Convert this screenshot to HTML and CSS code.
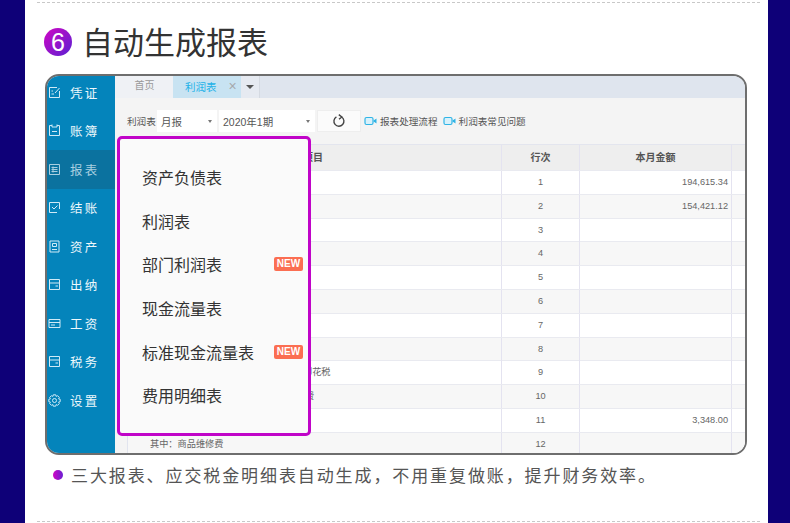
FILE: index.html
```html
<!DOCTYPE html>
<html lang="en">
<head>
    <meta charset="UTF-8">
    <meta name="viewport" content="width=device-width, initial-scale=1.0">
    <title>自动生成报表</title>
    <link rel="stylesheet" href="styles.css">
</head>
<body>
    <svg class="sprites" width="0" height="0">
        <symbol id="camera" viewBox="0 0 13 10">
            <rect x="1" y="1.5" width="8" height="7" rx="1.5" fill="#d8f1fb" stroke="#2fb4e6" stroke-width="1.2"/>
            <path d="M9.5 4.5 12.5 2.5V7.5L9.5 5.5Z" fill="#2fb4e6"/>
        </symbol>
    </svg>

    <div class="sheet">
        <div class="divider"></div>

        <!-- Heading -->
        <div class="heading">
            <span class="number">6</span>
            <h1>自动生成报表</h1>
        </div>

        <!-- App screenshot -->
        <div class="screen">
            <div class="sidebar">
                <div class="nav-item">
                    <svg class="nav-icon" viewBox="0 0 13 13"><path d="M9 1.5H1.5V11.5H11.5V5M5 5H3.5M3.5 8H6M7 7 11.5 2"/></svg>
                    <span>凭证</span>
                </div>
                <div class="nav-item">
                    <svg class="nav-icon" viewBox="0 0 13 13"><path d="M4 1.5H1.5V11.5H11.5V1.5H9M4 .5V3H9V.5M4 7.5H9"/></svg>
                    <span>账簿</span>
                </div>
                <div class="nav-item active">
                    <svg class="nav-icon" viewBox="0 0 13 13"><path d="M1.5 1.5H11.5V11.5H1.5ZM3.5 4.5H9.5M3.5 6.5H9.5M3.5 8.5H9.5M5 3.5V9.5"/></svg>
                    <span>报表</span>
                </div>
                <div class="nav-item">
                    <svg class="nav-icon" viewBox="0 0 13 13"><path d="M11.5 8V1.5H1.5V11.5H9M4 6 6 8 9.5 4.5"/></svg>
                    <span>结账</span>
                </div>
                <div class="nav-item">
                    <svg class="nav-icon" viewBox="0 0 13 13"><path d="M2 1H11V12H2ZM4.5 3.5H8.5V6.5H4.5ZM4 9.5H9"/></svg>
                    <span>资产</span>
                </div>
                <div class="nav-item">
                    <svg class="nav-icon" viewBox="0 0 13 13"><path d="M1.5 1.5H11.5V11.5H1.5ZM1.5 5H11.5M7.5 8H10"/></svg>
                    <span>出纳</span>
                </div>
                <div class="nav-item">
                    <svg class="nav-icon" viewBox="0 0 13 13"><path d="M1 2.5H12V10.5H1ZM1 5.5H12M3 8H7"/></svg>
                    <span>工资</span>
                </div>
                <div class="nav-item">
                    <svg class="nav-icon" viewBox="0 0 13 13"><path d="M1.5 1.5H11.5V11.5H1.5ZM1.5 5H11.5M7.5 8H10"/></svg>
                    <span>税务</span>
                </div>
                <div class="nav-item">
                    <svg class="nav-icon" viewBox="0 0 13 13"><circle cx="6.5" cy="6.5" r="2"/><path d="M5.3.8H7.7L8.1 2.4 9.6 1.7 11.3 3.4 10.6 4.9 12.2 5.3V7.7L10.6 8.1 11.3 9.6 9.6 11.3 8.1 10.6 7.7 12.2H5.3L4.9 10.6 3.4 11.3 1.7 9.6 2.4 8.1.8 7.7V5.3L2.4 4.9 1.7 3.4 3.4 1.7 4.9 2.4Z"/></svg>
                    <span>设置</span>
                </div>
            </div>

            <div class="main">
                <div class="tabs">
                    <div class="tab">首页</div>
                    <div class="tab tab-active">利润表<span class="tab-close">×</span></div>
                    <div class="tab-more"><span class="caret-big"></span></div>
                </div>

                <div class="toolbar">
                    <span class="tool-label">利润表</span>
                    <div class="select select-type">月报<span class="caret"></span></div>
                    <div class="select select-period">2020年1期<span class="caret"></span></div>
                    <div class="refresh">
                        <svg width="14" height="14" viewBox="0 0 14 14" fill="none" stroke="#444" stroke-width="1.4"><path d="M9.6 3A5 5 0 1 1 4.4 2.9"/><path d="M6.8 .6 9.8 3 7 5.2"/></svg>
                    </div>
                    <svg class="camera" viewBox="0 0 13 10"><use href="#camera"/></svg>
                    <span class="tool-link">报表处理流程</span>
                    <svg class="camera camera-second" viewBox="0 0 13 10"><use href="#camera"/></svg>
                    <span class="tool-link">利润表常见问题</span>
                </div>

                <div class="report">
                    <div class="row row-head">
                        <div class="cell cell-peek">项目</div>
                        <div class="cell cell-center">行次</div>
                        <div class="cell cell-center">本月金额</div>
                        <div class="cell"></div>
                    </div>
                    <div class="row"><div class="cell"></div><div class="cell cell-center">1</div><div class="cell cell-right">194,615.34</div><div class="cell"></div></div>
                    <div class="row"><div class="cell"></div><div class="cell cell-center">2</div><div class="cell cell-right">154,421.12</div><div class="cell"></div></div>
                    <div class="row"><div class="cell"></div><div class="cell cell-center">3</div><div class="cell cell-right"></div><div class="cell"></div></div>
                    <div class="row"><div class="cell"></div><div class="cell cell-center">4</div><div class="cell cell-right"></div><div class="cell"></div></div>
                    <div class="row"><div class="cell"></div><div class="cell cell-center">5</div><div class="cell cell-right"></div><div class="cell"></div></div>
                    <div class="row"><div class="cell"></div><div class="cell cell-center">6</div><div class="cell cell-right"></div><div class="cell"></div></div>
                    <div class="row"><div class="cell"></div><div class="cell cell-center">7</div><div class="cell cell-right"></div><div class="cell"></div></div>
                    <div class="row"><div class="cell"></div><div class="cell cell-center">8</div><div class="cell cell-right"></div><div class="cell"></div></div>
                    <div class="row"><div class="cell cell-peek">印花税</div><div class="cell cell-center">9</div><div class="cell cell-right"></div><div class="cell"></div></div>
                    <div class="row"><div class="cell cell-peek cell-fee">费</div><div class="cell cell-center">10</div><div class="cell cell-right"></div><div class="cell"></div></div>
                    <div class="row"><div class="cell"></div><div class="cell cell-center">11</div><div class="cell cell-right">3,348.00</div><div class="cell"></div></div>
                    <div class="row"><div class="cell">其中：商品维修费</div><div class="cell cell-center">12</div><div class="cell cell-right"></div><div class="cell"></div></div>
                </div>
            </div>

            <!-- Report menu, lies over the table -->
            <div class="report-menu">
                <div class="menu-item">资产负债表</div>
                <div class="menu-item">利润表</div>
                <div class="menu-item">部门利润表<span class="badge">NEW</span></div>
                <div class="menu-item">现金流量表</div>
                <div class="menu-item">标准现金流量表<span class="badge">NEW</span></div>
                <div class="menu-item">费用明细表</div>
            </div>
        </div>

        <!-- Caption -->
        <div class="caption">
            <span class="dot"></span>
            <p>三大报表、应交税金明细表自动生成，不用重复做账，提升财务效率。</p>
        </div>

        <div class="divider"></div>
    </div>
</body>
</html>
```

FILE: styles.css
```css
body {
    font-family: 'Liberation Sans', 'Noto Sans CJK SC', sans-serif;
    background-color: #0e0078;
    margin: 0;
    padding: 0 22px 0 25px;
    height: 523px;
    overflow: hidden;
}

.sprites {
    position: absolute;
}

.sheet {
    background-color: #fff;
    height: 523px;
    padding-top: 2px;
    box-sizing: border-box;
}

.divider {
    height: 0;
    margin: 0 8px 0 12px;
    border-top: 1px dashed #c8c8c8;
}

.heading {
    display: flex;
    align-items: center;
    height: 28px;
    margin: 25px 0 18px 19px;
}

.number {
    width: 28px;
    height: 28px;
    border-radius: 50%;
    background: linear-gradient(135deg, #d006c4, #5a22d2);
    color: #fff;
    font-size: 25px;
    line-height: 28px;
    text-align: center;
}

.heading h1 {
    margin: -4px 0 0 10px;
    font-size: 31px;
    font-weight: 400;
    color: #333;
}

.screen {
    position: relative;
    display: flex;
    width: 702px;
    height: 381px;
    margin-left: 20px;
    box-sizing: border-box;
    border: 2px solid #6e6e6e;
    border-radius: 14px;
    overflow: hidden;
    background-color: #f4f4f4;
}

/* sidebar */
.sidebar {
    width: 68px;
    flex-shrink: 0;
    background-color: #0484bb;
    overflow: hidden;
}

.nav-item {
    display: flex;
    align-items: center;
    height: 38.5px;
    padding-left: 1px;
    color: #eef8fc;
    font-size: 12.5px;
    letter-spacing: 2.2px;
}

.nav-item:first-child {
    margin-top: -3px;
}

.nav-item.active {
    background-color: #0b729f;
    color: #a9cfe0;
}

.nav-icon {
    width: 13px;
    height: 13px;
    margin-right: 9px;
    fill: none;
    stroke: #cfeaf6;
    stroke-width: 1;
}

.active .nav-icon {
    stroke: #a9cfe0;
}

/* right part */
.main {
    flex: 1;
    display: flex;
    flex-direction: column;
    min-width: 0;
}

.tabs {
    display: flex;
    height: 22px;
    background-color: #dfe5ee;
    font-size: 10px;
    line-height: 20px;
    color: #999;
}

.tab {
    width: 58px;
    background-color: #eff1f5;
    text-align: center;
    box-sizing: border-box;
    padding-left: 1px;
}

.tab-active {
    width: 68px;
    background-color: #c8e3f2;
    color: #22b2e8;
    font-size: 10.5px;
    text-align: left;
    padding-left: 12px;
}

.tab-close {
    margin-left: 12px;
    color: #a5a9ad;
    font-size: 14px;
}

.tab-more {
    display: flex;
    align-items: center;
    justify-content: center;
    width: 18px;
    background-color: #e6eaf1;
    border-right: 1px solid #d5dae2;
}

.caret-big {
    border-top: 4px solid #555;
    border-left: 4px solid transparent;
    border-right: 4px solid transparent;
}

.toolbar {
    display: flex;
    align-items: center;
    height: 46px;
    padding-left: 12px;
    font-size: 9.6px;
    color: #555;
    box-sizing: border-box;
}

.tool-label {
    width: 30px;
}

.select {
    display: flex;
    align-items: center;
    justify-content: space-between;
    height: 22px;
    padding: 0 5px 0 4px;
    margin-right: 2px;
    background-color: #fff;
    box-sizing: border-box;
    color: #555;
    font-size: 10.5px;
}

.select-type {
    width: 60px;
}

.select-period {
    width: 96px;
}

.caret {
    border-top: 3px solid #777;
    border-left: 2.5px solid transparent;
    border-right: 2.5px solid transparent;
}

.refresh {
    display: flex;
    align-items: center;
    justify-content: center;
    width: 44px;
    height: 22px;
    background-color: #fbfbfb;
    border: 1px solid #eee;
    box-sizing: border-box;
}

.camera {
    width: 13px;
    height: 10px;
    margin: 0 3px 0 3px;
}

.camera-second {
    margin-left: 5px;
}

.report {
    flex: 1;
    margin-left: 12px;
    background-color: #fff;
    border-left: 1px solid #e1e4ee;
    border-top: 1px solid #e3e5ee;
    font-size: 9.2px;
    color: #666;
    overflow: hidden;
}

.row {
    display: grid;
    grid-template-columns: 374px 78px 152px 1fr;
    height: 23.8px;
    box-sizing: border-box;
    border-bottom: 1px solid #e9eaf0;
    line-height: 23px;
}

.row:nth-child(odd) {
    background-color: #f7f7f7;
}

.row-head.row-head {
    height: 26px;
    line-height: 25px;
    background-color: #eeeeee;
    font-size: 10px;
    font-weight: 700;
    color: #555;
}

.cell {
    border-right: 1px solid #e4e3f0;
    padding-left: 22px;
    white-space: nowrap;
}

/* starts under the menu, the rest shows past its right edge */
.cell-peek {
    padding-left: 175px;
}

.cell-fee {
    padding-left: 177px;
}

.cell-center {
    padding-left: 0;
    text-align: center;
}

.cell-right {
    padding: 0 3px 0 0;
    text-align: right;
}

/* popup menu */
.report-menu {
    position: absolute;
    left: 70px;
    top: 60px;
    width: 194px;
    height: 300px;
    box-sizing: border-box;
    padding: 16px 5px 0 22px;
    background-color: #fafafa;
    border: 3px solid #c004c8;
    border-radius: 5px;
}

.menu-item {
    display: flex;
    align-items: center;
    justify-content: space-between;
    height: 43.7px;
    font-size: 16px;
    color: #333;
}

.badge {
    width: 29px;
    height: 14px;
    border-radius: 2px;
    background-color: #fb6e52;
    color: #fff;
    font-size: 10px;
    font-weight: 700;
    line-height: 14px;
    text-align: center;
}

/* caption */
.caption {
    display: flex;
    align-items: center;
    height: 40px;
    margin-bottom: 26px;
    padding-left: 28px;
}

.dot {
    width: 10px;
    height: 10px;
    border-radius: 50%;
    background: linear-gradient(90deg, #d006c4, #6a20d2);
}

.caption p {
    margin: -2px 0 0 8px;
    font-size: 17px;
    letter-spacing: 1.9px;
    color: #555;
    white-space: nowrap;
}
```
